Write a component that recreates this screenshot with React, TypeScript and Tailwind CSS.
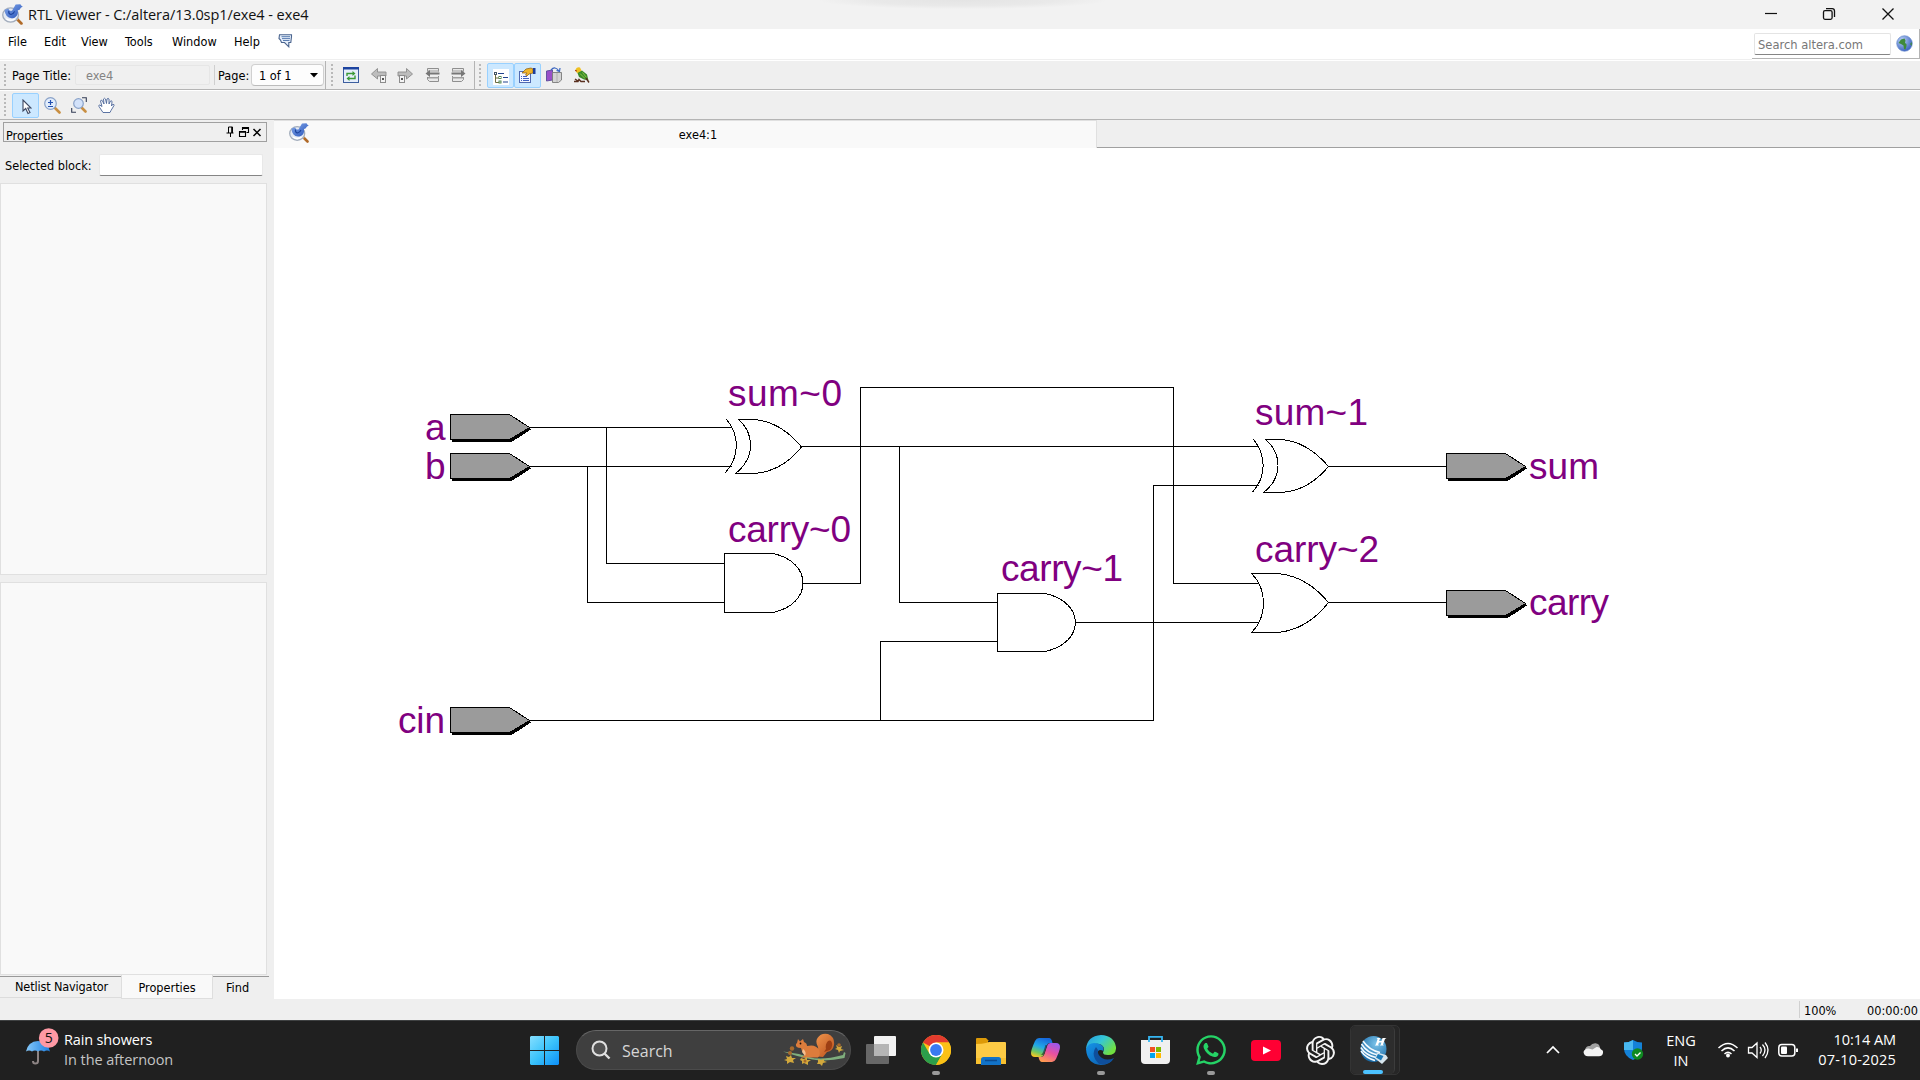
import type { ReactNode } from "react";
import { SiOpenai } from "react-icons/si";
import { FaWhatsapp } from "react-icons/fa";

function ViewerLogo({ size }: { size: number }) {
  return (
    <svg width={size} height={size} viewBox="0 0 20 20">
      <defs>
        <linearGradient id="bird" x1="0" y1="0" x2="1" y2="1">
          <stop offset="0" stopColor="#86abec" />
          <stop offset="1" stopColor="#2450b8" />
        </linearGradient>
      </defs>
      <path d="M14.500 14.500l4 4" stroke="#b06a28" strokeWidth="2.600" strokeLinecap="round" />
      <path d="M13 13l2 2" stroke="#e0b070" strokeWidth="2" />
      <ellipse cx="8.200" cy="10.500" rx="7.500" ry="6.800" fill="#e4eaf4" stroke="#a3adbc" strokeWidth="1.300" />
      <path d="M2.500 5.500l3.500-1 1.500 2h2l2-3.500 1.500-2.500 4.500-.3 1 1.500 1.300.7-1.800 1.200-1.500 2-1.500.4q.8 5-3 7-5 1.500-7.500-1.500-2-2.500-2-6z" fill="url(#bird)" />
      <path d="M6.500 6.500q-.5 3 2 3.500 2.500-.5 3.500-3" stroke="#1b429c" strokeWidth="1.100" fill="none" />
      <path d="M4 14q4 3 8.500 0" stroke="#fff" strokeWidth="1.300" fill="none" />
    </svg>
  );
}

function Grip() {
  return (
    <div className="flex w-[3px] flex-col gap-[2px]">
      {[0, 1, 2, 3, 4, 5].map((i) => (
        <div key={i} className="h-[2px] w-[2px] bg-[#b9b9b9]" />
      ))}
    </div>
  );
}

function TitleBar() {
  return (
    <div className="flex h-[29px] items-center bg-[#f2f2f2]">
      <div className="ml-[2px] w-[26px]">
        <ViewerLogo size={21} />
      </div>
      <div className="w-[300px] whitespace-nowrap font-['Open_Sans',sans-serif] text-[14.500px] tracking-[-0.07px] text-[#111]">
        RTL Viewer - C:/altera/13.0sp1/exe4 - exe4
      </div>
      <div className="ml-[492px] h-[9px] w-[286px] self-start bg-[radial-gradient(ellipse_at_top,#e4e4e4_0%,#e9e9e9_45%,#f2f2f2_72%)]" />
      <svg width="150" height="29" viewBox="1765 0 150 29" fill="none" stroke="#111" className="ml-auto mr-[5px]">
        <path d="M1765 13.500h12" strokeWidth="1.2" />
        <rect x="1823.500" y="10.700" width="8.600" height="8.600" rx="1.500" strokeWidth="1.3" />
        <path d="M1826 8.600h6.200q2.300 0 2.300 2.300v6.200" strokeWidth="1.3" />
        <path d="M1882.500 8.500l11 11M1893.500 8.500l-11 11" strokeWidth="1.3" />
      </svg>
    </div>
  );
}

function MenuBar() {
  return (
    <div className="flex h-[32px] bg-white">
      <div className="flex h-[31px] flex-1 border-b border-[#efefef]">
        <div className="flex h-[25px] items-center pl-[8px]">
          <span className="w-[36px]">File</span>
          <span className="w-[37px]">Edit</span>
          <span className="w-[44px]">View</span>
          <span className="w-[47px]">Tools</span>
          <span className="w-[62px]">Window</span>
          <span className="w-[44px]">Help</span>
          <svg width="15" height="14" viewBox="0 0 15 14" className="mb-[1px]">
            <path d="M1.500.7h12v2l-.7 5.800h-2v4.300L6.500 8.500h-3L2.500 6 1 4.500z" fill="#e6effb" stroke="#4a648e" strokeWidth="1.100" />
            <path d="M3.500 2.700h8.500M4 4.600h8M5 6.500h6.500" stroke="#4a6fa8" strokeWidth=".9" />
          </svg>
        </div>
      </div>
      <div className="flex h-[30px] w-[168px] border-b border-r border-[#b4b4b4] pl-[2px] pt-[4px]">
        <div className="flex h-[22px] w-[137px] items-center rounded-[2px] border border-[#e4e4e4] border-b-[#858585] pl-[3px] pt-[1px] text-[12.800px] text-[#777]">
          Search altera.com
        </div>
        <svg width="17" height="17" viewBox="0 0 17 17" className="ml-[5px] mt-[2px]">
          <defs>
            <radialGradient id="globe" cx=".35" cy=".3" r=".8">
              <stop offset="0" stopColor="#bcd3f8" />
              <stop offset="1" stopColor="#2b55b8" />
            </radialGradient>
          </defs>
          <circle cx="8.500" cy="8.500" r="7.800" fill="url(#globe)" stroke="#6d8fd0" strokeWidth=".7" />
          <path d="M2.500 8l2.500-3.500 3.500-1 1 2-.5 2.500 1.500 1v2l-1 3.500-1.500-.5-.5-3.500-2.500-1.500zM14 9l1.800-2v4z" fill="#3f8a3c" />
        </svg>
      </div>
    </div>
  );
}

const ToolIcon = ({ x, children }: { x: string; children: ReactNode }) => (
  <div className={x}>
    <svg width="16" height="16" viewBox="0 0 16 16">
      {children}
    </svg>
  </div>
);

function PageToolbar() {
  return (
    <div className="flex h-[29px] items-center border-b border-[#b4b4b4] bg-[#efefef] pl-[4px]">
      <Grip />
      <span className="ml-[5px] w-[63px] whitespace-nowrap pt-[1px]">Page Title:</span>
      <div className="flex h-[20px] w-[135px] items-center rounded-[2px] border border-[#e6e6e6] bg-[#f0f0f0] pl-[10px] pt-[1px] text-[#838383]">exe4</div>
      <div className="ml-[4px] h-[20px] w-px bg-[#cfcfcf]" />
      <span className="ml-[3px] w-[33px] whitespace-nowrap pt-[1px]">Page:</span>
      <div className="flex h-[22px] w-[73px] items-center rounded-[4px] border border-[#d0d0d0] border-b-[#bcbcbc] bg-[#fdfdfd] pl-[7px]">
        <span className="w-[51px] whitespace-nowrap pt-[1px]">1 of 1</span>
        <svg width="8" height="5" viewBox="0 0 8 5">
          <path d="M0 0h8L4 4.500z" fill="#000" />
        </svg>
      </div>
      <div className="ml-[1px] h-full w-px bg-[#b4b4b4]" />
      <div className="ml-[5px]">
        <Grip />
      </div>
      <ToolIcon x="ml-[9px]">
        <rect x=".5" y=".5" width="15" height="15" fill="#e6eefb" stroke="#3d5f9f" />
        <path d="M0 0h16v2.500H0z" fill="#1d44a0" />
        <path d="M4 9V6.500h6.500M12 8.500v3H5.500" fill="none" stroke="#3a9a36" strokeWidth="1.400" />
        <path d="M9.500 4l3 2.500-3 2.500zM6.500 9l-3 2.500 3 2.500z" fill="#3a9a36" />
      </ToolIcon>
      <ToolIcon x="ml-[12px]">
        <path d="M.5 7l6-5.500V5H15v4H6.500v3z" fill="#bdbdbd" stroke="#8c8c8c" strokeWidth=".9" />
        <rect x="9.500" y="8.500" width="5" height="7" fill="#f4f4f4" stroke="#8c8c8c" />
        <path d="M11 11h2v2h-2z" fill="#555" />
      </ToolIcon>
      <ToolIcon x="ml-[10px]">
        <path d="M15.500 7l-6-5.500V5H1v4h8.500v3z" fill="#bdbdbd" stroke="#8c8c8c" strokeWidth=".9" />
        <rect x="2.500" y="8.500" width="5" height="7" fill="#f4f4f4" stroke="#8c8c8c" />
        <path d="M4 11h2v2H4z" fill="#555" />
      </ToolIcon>
      <ToolIcon x="ml-[12px]">
        <path d="M2.500 4.500V1.500h11v3M2.500 10v2.500l2 2h9V9" fill="#e8e8e8" stroke="#8f8f8f" />
        <path d="M2 3.500h12v1H2zM3 10h11v1.500H3z" fill="#9f9f9f" />
        <path d="M.5 6.500L5 3v2.500h9.500v2H5V10z" fill="#777" />
      </ToolIcon>
      <ToolIcon x="ml-[10px]">
        <path d="M1.500 4.500V1.500h11v3M1.500 9v5.500h9l2-2V10" fill="#e8e8e8" stroke="#8f8f8f" />
        <path d="M1 3.500h12v1H1zM1 10h12v1.500H1z" fill="#9f9f9f" />
        <path d="M14.500 6.500L10 3v2.500H.5v2H10V10z" fill="#777" />
      </ToolIcon>
      <div className="ml-[7px] h-full w-px bg-[#b4b4b4]" />
      <div className="ml-[4px]">
        <Grip />
      </div>
      <div className="ml-[5px] flex h-[25px] w-[27px] items-center justify-center rounded-[2px] border border-[#99d1ff] bg-[#cce8ff]">
        <svg width="16" height="16" viewBox="0 0 16 16" className="mt-[3px]">
          <path d="M0 0h16v16H0z" fill="#fff" />
          <path d="M2.500 5v8.500H6M2.500 9H6" fill="none" stroke="#6b6b40" strokeWidth="1" />
          <rect x="1.500" y="3.500" width="2" height="2" fill="#fff" stroke="#456" />
          <rect x="6" y="7.500" width="2" height="2" fill="#fff" stroke="#585" />
          <rect x="6" y="12" width="2" height="2" fill="#fff" stroke="#585" />
          <path d="M5 4.500h6M10 8.500h5M10 13h5" stroke="#23448f" strokeWidth="1.2" />
        </svg>
      </div>
      <div className="flex h-[25px] w-[27px] items-center justify-center rounded-[2px] border border-[#99d1ff] bg-[#cce8ff]">
        <svg width="17" height="16" viewBox="0 0 17 16">
          <rect x=".5" y="4.500" width="11" height="11" fill="#f5f7ff" stroke="#5068b0" />
          <path d="M2 11.500h1M4 11.500h6M2 13.500h1M4 13.500h6M2 9.500h1M4 9.500h4" stroke="#3f5fc0" />
          <path d="M3 6l4-4 5-1 2 1v4l-4 1-2 2-1.500-1L8 6z" fill="#f0b429" stroke="#8a5a10" strokeWidth=".7" />
          <path d="M14 1h2.500v6H14z" fill="#1c3d9a" />
        </svg>
      </div>
      <ToolIcon x="ml-[5px]">
        <path d="M.5 4l6-1v10l-6 1z" fill="#9a50c8" stroke="#5a4a98" strokeWidth=".9" />
        <path d="M6.500 5.500h9v7.500l-3 2.500h-6z" fill="#d4d4d4" stroke="#7b7b7b" strokeWidth=".9" />
        <path d="M11 6v9" stroke="#b0b0b0" />
        <path d="M5 3q4-4.500 8 1M10.500 3.500l3 1 .5-3.500" fill="none" stroke="#3b66c0" strokeWidth="1.2" />
      </ToolIcon>
      <ToolIcon x="ml-[12px]">
        <path d="M1.500 2.500Q3-.5 6 .5l1.500 3L5 7 2 5z" fill="#f0c020" />
        <path d="M3.500 6L8 3.500l5 4 1.500 6-4.500-1-5-2.500z" fill="#3a8a2a" />
        <path d="M6 6.500l5 5M8.500 5.500l4 5" stroke="#8cc840" />
        <path d="M0 14.500h4l1-2 2 2h4M12 11l3 4.500M1 12l3 2" stroke="#5a3020" strokeWidth="1.400" fill="none" />
        <path d="M1 3.500l2 .5" stroke="#a03010" />
      </ToolIcon>
    </div>
  );
}

function SelectionToolbar() {
  return (
    <div className="flex h-[30px] items-center border-b border-t border-b-[#b4b4b4] border-t-white bg-[#efefef] pl-[4px]">
      <Grip />
      <div className="ml-[5px] flex h-[25px] w-[27px] items-center justify-center rounded-[2px] border border-[#99d1ff] bg-[#cce8ff]">
        <svg width="10" height="16" viewBox="0 0 10 16" className="ml-[2px] mt-[4px]">
          <path d="M1 1v11l2.700-2.500L6 14.500l2-1-2.300-4.500H9z" fill="#fff" stroke="#3c4660" strokeWidth="1.1" />
        </svg>
      </div>
      <svg width="17" height="17" viewBox="0 0 17 17" className="ml-[5px]">
        <path d="M11 11l4.500 4.500" stroke="#c98f42" strokeWidth="2.600" strokeLinecap="round" />
        <circle cx="6.500" cy="6.500" r="5.800" fill="#e2edfc" stroke="#8aa2c8" strokeWidth="1.2" />
        <path d="M6.500 3v5M4 5.500h5M4 9.500h5" stroke="#2350b0" strokeWidth="1.2" />
      </svg>
      <svg width="16" height="16" viewBox="0 0 16 16" className="ml-[10px]">
        <path d="M11 11l3.500 3.500" stroke="#c98f42" strokeWidth="2.600" strokeLinecap="round" />
        <circle cx="7.500" cy="6.500" r="4.800" fill="#d3e2fa" stroke="#8aa2c8" strokeWidth="1.200" />
        <path d="M11 .7h4.300V5M.7 11v4.300H5" fill="none" stroke="#333c55" strokeWidth="1.1" />
      </svg>
      <svg width="17" height="17" viewBox="0 0 17 17" className="ml-[11px]">
        <path d="M5 15.500L1 9.500Q.3 8 1.800 8L4 9.500 2.500 4Q3 2.500 4.200 3.500L6 7 5.500 2Q6.500.5 7.500 2L8.500 6.500 9 2Q10.200.8 11 2L11 7 12.500 4Q14 3.200 14 4.800L13.500 9 14.500 7.500Q16.500 7 16 8.500L13 13.500 12 15.500z" fill="#fff" stroke="#4a6498" strokeWidth=".9" />
      </svg>
    </div>
  );
}

function PropertiesPanel() {
  return (
    <div className="flex w-[274px] flex-col">
      <div className="ml-[3px] mt-[2px] flex h-[20px] w-[264px] items-center border border-[#a0a0a0] pl-[2px]">
        <span className="mt-[7px] w-[220px]">Properties</span>
        <svg width="36" height="12" viewBox="226 126 36 12" fill="none" stroke="#000" className="mb-[1px]">
          <path d="M228.500 133v-6h4v6M226.500 133h7M230.500 133v4M231.700 127v6" strokeWidth="1" />
          <path d="M242.500 130v-2.500h6v5h-2M242 128.500h7M239.500 131.500h6v5h-6zM239 132.200h7" strokeWidth="1.1" />
          <path d="M253.500 129l7 7M260.500 129l-7 7" strokeWidth="1.500" />
        </svg>
      </div>
      <div className="mt-[12px] flex h-[22px] items-center pl-[5px]">
        <span className="w-[94px] whitespace-nowrap pt-[2px]">Selected block:</span>
        <div className="h-[22px] w-[164px] rounded-[2px] border border-[#e8e8e8] border-b-[#858585] bg-white" />
      </div>
      <div className="mt-[7px] h-[392px] w-[267px] border border-[#e0e0e0] bg-[#f9f9f9]" />
      <div className="mt-[7px] h-[393px] w-[267px] border border-[#e0e0e0] bg-[#f9f9f9]" />
      <div className="flex">
        <div className="mt-px flex h-[22px] w-[121px] items-center justify-center whitespace-nowrap border-b border-t border-b-[#dcdcdc] border-t-[#999] bg-[#f0f0f0] pl-[2px] tracking-[-0.15px]">
          Netlist Navigator
        </div>
        <div className="flex h-[24px] w-[92px] items-center justify-center border border-t-0 border-[#dedede] bg-[#f9f9f9] pt-[2px]">Properties</div>
        <div className="mt-px flex h-[22px] w-[56px] items-center border-t border-[#999] pl-[13px]">Find</div>
      </div>
    </div>
  );
}

const pins = [
  [450, 414],
  [450, 453],
  [450, 707],
  [1446, 453],
  [1446, 590],
];

const labels: [string, number, number, number][] = [
  ["a", 425, 440, 20],
  ["b", 425, 479, 20],
  ["cin", 398, 733, 47],
  ["sum~0", 728, 406, 114],
  ["carry~0", 728, 542, 123],
  ["carry~1", 1001, 581, 122],
  ["sum~1", 1255, 425, 113],
  ["carry~2", 1255, 562, 124],
  ["sum", 1529, 479, 70],
  ["carry", 1529, 615, 80],
];

function Schematic() {
  return (
    <svg width="1646" height="851" viewBox="274 148 1646 851" className="block bg-white">
      <g fill="none" stroke="#000" strokeWidth="1" shapeRendering="crispEdges">
        <path d="M530 427.500H732M530 466.500H732M606.500 427V563.500H724M587.500 466V602.500H724" />
        <path d="M803 583.500H860.500V387.500H1173.500V583.500H1258.500M802 446.500H1258.500M899.500 446V602.500H997" />
        <path d="M530 720.500H1153.500V485.500H1258.500M880.500 720V641.500H997M1076 622.500H1258.500M1329 466.500H1446M1329 602.500H1446" />
        <path d="M773 553.500H724.500V612.500H773C813 604 813 562 773 553.500" fill="#fff" />
        <path d="M1045 593.500H997.500V651.500H1045C1085.500 643 1085.500 602 1045 593.500" fill="#fff" />
        <path d="M726.500 419.500C740 435 740 458 724.500 473.500" />
        <path d="M753.500 419.500H738.500C755 434 755 458 735.500 473.500H753.500C777 472 792 459 801.500 447C790 433 775 421 753.500 419.500" />
        <path d="M1253.500 439.500C1266.500 455 1266.500 477 1252.500 492" />
        <path d="M1281 439.500H1265.500C1282.500 454 1282.500 478 1263.500 492.500H1281C1304 491 1319 478 1328.500 466.500C1317 453 1302 441 1281 439.500" />
        <path d="M1278 573.500H1251.500C1267.500 589 1267.500 617 1251.500 632.500H1278C1302 630 1318 616 1328.500 602.500C1317 589 1302 576 1278 573.500" />
      </g>
      {pins.map(([x, y]) => (
        <g key={`${x}-${y}`} shapeRendering="crispEdges">
          <path d={`M${x + 2} ${y + 28}H${x + 61.5}L${x + 81} ${y + 15.5}L${x + 79} ${y + 12}L${x + 58} ${y + 24}H${x + 2}z`} fill="#000" />
          <path d={`M${x + 0.5} ${y + 0.5}H${x + 59.5}L${x + 79.5} ${y + 13.5}L${x + 59.5} ${y + 25.5}H${x + 0.5}z`} fill="#9b9b9b" stroke="#000" />
        </g>
      ))}
      <g fill="#800080" fontFamily="'Liberation Sans', Arial, sans-serif" fontSize="37">
        {labels.map(([text, x, y, w]) => (
          <text key={text} x={x} y={y} textLength={w}>
            {text}
          </text>
        ))}
      </g>
    </svg>
  );
}

function Workspace() {
  return (
    <div className="w-[1646px]">
      <div className="flex h-[28px]">
        <div className="flex h-[28px] w-[823px] items-center border-r border-t border-[#e0e0e0] bg-[#f9f9f9] pl-[15px]">
          <div className="mb-[3px]">
            <ViewerLogo size={20} />
          </div>
          <span className="w-[778px] text-center">exe4:1</span>
        </div>
        <div className="flex-1 border-b border-[#a0a0a0]" />
      </div>
      <Schematic />
    </div>
  );
}

function StatusBar() {
  return (
    <div className="flex h-[21px] items-center bg-[#efefef]">
      <div className="ml-auto h-[17px] w-px bg-[#d0d0d0]" />
      <span className="ml-[4px] mt-[2px] w-[63px]">100%</span>
      <span className="mt-[2px] w-[53px] whitespace-nowrap">00:00:00</span>
    </div>
  );
}

function TaskItem({ children, running }: { children: ReactNode; running?: boolean }) {
  return (
    <div className="flex h-[58px] w-[55px] flex-col items-center">
      <div className="flex h-[49px] items-center pt-[9px]">{children}</div>
      {running && <div className="mt-[1px] h-[4px] w-[8px] rounded-full bg-[#9a9a9a]" />}
    </div>
  );
}

function Squirrel() {
  return (
    <svg width="64" height="34" viewBox="0 0 64 34">
      <defs>
        <linearGradient id="tail" x1="0" y1="0" x2="1" y2="1">
          <stop offset="0" stopColor="#f39a50" />
          <stop offset="1" stopColor="#b9501c" />
        </linearGradient>
      </defs>
      <path d="M0 18.500q14 1.500 26 5.500t34-2l1-3 1.500 1-1 5q-18 4-32 1.500T0 18.500z" fill="#7fae7d" />
      <path d="M30 23q6-4 5-9-3-5-.5-9Q38-.5 45 1q7 3 6 11-1 6-7 7l-4 5z" fill="url(#tail)" />
      <path d="M45 8q-3 3-2 8l-2 3 6-2q4-5 1-9-1-1-3 0z" fill="#9c3f14" />
      <path d="M14 10l1-4 2 2.500 3-2.500 1 3q3 1 3 4 9-2 12 4 2 5-1 7.500H18l4-2.500-3-4-1-3q-6 0-5-4z" fill="#dc7c3c" />
      <path d="M20 16q4 3 2 7l-3-4z" fill="#f6c090" />
      <circle cx="17.500" cy="10.500" r=".9" fill="#201008" />
      <g fill="#d2a83c">
        <path d="M3 23l3 1 2-2 1 3 4 0-3 2 1 3-4-1-3 2 0-3-3-1 3-1zM18 25l3 1 3-2 0 3 4 0-3 2 0 3-4-2-2 1 0-3-2-1zM35 26l3 1 3-1 0 2 3 1-4 1-1 3-2-2-3 0 1-2zM53 12l3 2 3-1-1 3 3 1-4 1-1 2-1-3-3-1 2-1z" />
      </g>
      <g fill="#a86a2c">
        <circle cx="9" cy="15.500" r="2.200" />
        <circle cx="7" cy="20" r="2" />
        <circle cx="56" cy="12" r="1.800" />
        <circle cx="22" cy="28" r="1.500" />
      </g>
    </svg>
  );
}

function Taskbar() {
  return (
    <div className="flex h-[60px] border-t border-[#3f4142] bg-[#202020] font-['Open_Sans',sans-serif] text-white">
      <div className="flex w-[530px] pl-[25px] pt-[6px]">
        <svg width="36" height="40" viewBox="25 1027 36 40">
          <defs>
            <linearGradient id="umbrella" x1="0" x2="1">
              <stop offset="0" stopColor="#85c8fa" />
              <stop offset="1" stopColor="#1e7fe0" />
            </linearGradient>
          </defs>
          <path d="M38 1050v11q0 2.500-2.700 2.500-2.300 0-2.300-2.500" fill="none" stroke="#8d8484" strokeWidth="2" />
          <path d="M26 1051.500q2-10 12-10.500 10 .5 12 10.500-3-2-6 0-3-2-6 0-3-2-6 0-3-2-6 0z" fill="url(#umbrella)" />
          <circle cx="48.700" cy="1038" r="9.800" fill="#ff99a4" />
          <text x="48.700" y="1043" fontSize="14" textAnchor="middle" fill="#111" fontFamily="'Open Sans', sans-serif">5</text>
        </svg>
        <div className="ml-[3px] mt-[3px] whitespace-nowrap text-[14.500px] leading-[20px]">
          <div className="tracking-[-0.15px]">Rain showers</div>
          <div className="tracking-[-0.06px] text-[#c4c4c4]">In the afternoon</div>
        </div>
      </div>
      <svg width="29" height="29" viewBox="0 0 29 29" className="mt-[15px]">
        <defs>
          <linearGradient id="win" x1="0" y1="0" x2="1" y2="1">
            <stop offset="0" stopColor="#85dfff" />
            <stop offset=".5" stopColor="#3bc3fb" />
            <stop offset="1" stopColor="#0d8ff8" />
          </linearGradient>
        </defs>
        <path d="M1 0h13v14H0V1zM15 0h13l1 1v13H15zM0 15h14v14H1l-1-1zM15 15h14v13l-1 1H15z" fill="url(#win)" />
      </svg>
      <div className="ml-[17px] mt-[9px] flex h-[40px] w-[275px] items-center rounded-full border border-[#4b4b4b] border-t-[#666] bg-[#3f3f3f]">
        <svg width="20" height="20" viewBox="0 0 20 20" fill="none" stroke="#e0e0e0" strokeWidth="2" className="ml-[14px]">
          <circle cx="8.500" cy="8.500" r="7" fill="#525252" />
          <path d="M13.500 13.500l5 5" strokeWidth="2.400" />
        </svg>
        <span className="ml-[11px] w-[161px] pt-[1px] text-[16px] text-[#d6d6d6]">Search</span>
        <Squirrel />
      </div>
      <svg width="31" height="28" viewBox="0 0 31 28" className="ml-[15px] mt-[15px]">
        <rect x="8" y="0" width="22" height="20" rx="1" fill="#f2f2f2" />
        <rect x="0" y="8" width="23" height="20" rx="1" fill="#6f6f6f" opacity=".9" />
        <path d="M8 8h15v12H8z" fill="#b5b5b5" />
      </svg>
      <div className="ml-[11px] flex">
        <TaskItem running>
          <svg width="30" height="30" viewBox="0 0 30 30">
            <circle cx="15" cy="15" r="15" fill="#fbc116" />
            <path d="M2 7.500A15 15 0 0 1 28 7.500H15L8.500 11z" fill="#e33b2e" />
            <path d="M2 7.500A15 15 0 0 0 15 30l6.500-11.300H8.500z" fill="#2c9f4b" />
            <path d="M15 7.500h13A15 15 0 0 1 15 30l6.500-11.300z" fill="#fbc116" />
            <circle cx="15" cy="15" r="7.500" fill="#fff" />
            <circle cx="15" cy="15" r="5.900" fill="#3a7af0" />
          </svg>
        </TaskItem>
        <TaskItem>
          <svg width="30" height="27" viewBox="0 0 30 27" className="mt-[2px]">
            <path d="M0 1q0-1 1-1h9l3 3h-1v5H0z" fill="#dd9a08" />
            <path d="M10 5l3-1h16q1 0 1 1v21H0V6q6 0 10-1z" fill="#fdcb45" />
            <path d="M0 20h30v5q0 1-1 1H0z" fill="#f8c02f" />
            <path d="M5 27v-5.500q0-2.500 2.500-2.500h15q2.500 0 2.500 2.500V27z" fill="#1273c8" />
            <path d="M9 22.500h12" stroke="#0b4b90" strokeWidth="1.500" />
          </svg>
        </TaskItem>
        <TaskItem>
          <svg width="29" height="26" viewBox="0 0 29 26">
            <defs>
              <linearGradient id="copA" x1=".6" y1="0" x2=".2" y2="1">
                <stop offset="0" stopColor="#1668dc" />
                <stop offset=".45" stopColor="#20a8e8" />
                <stop offset=".75" stopColor="#70c860" />
                <stop offset="1" stopColor="#ffc820" />
              </linearGradient>
              <linearGradient id="copB" x1=".8" y1="0" x2=".3" y2="1">
                <stop offset="0" stopColor="#9858f0" />
                <stop offset=".5" stopColor="#e850a0" />
                <stop offset="1" stopColor="#ff9a50" />
              </linearGradient>
            </defs>
            <path d="M8 1h10q2.500 0 3.500 5h-3q-2 0-3 3l-3 9q-1 2-3 2H4q-4 0-4-4 0-3 4-12 1.500-3 4-3z" fill="url(#copA)" />
            <path d="M21 25H11q-2.500 0-3.500-5h3q2 0 3-3l3-9q1-2 3-2H25q4 0 4 4 0 3-4 12-1.500 3-4 3z" fill="url(#copB)" />
            <path d="M16 8l-3.500 10h-3q1.500 0 3-4l2-6z" fill="#202020" opacity=".6" />
          </svg>
        </TaskItem>
        <TaskItem running>
          <svg width="30" height="30" viewBox="0 0 30 30">
            <defs>
              <linearGradient id="edgeTop" x1="0" y1="0" x2="1" y2=".6">
                <stop offset="0" stopColor="#2499e0" />
                <stop offset=".5" stopColor="#35c6d6" />
                <stop offset="1" stopColor="#72e040" />
              </linearGradient>
              <linearGradient id="edgeLow" x1="0" y1="0" x2="1" y2="1">
                <stop offset="0" stopColor="#1594e8" />
                <stop offset="1" stopColor="#0c58a8" />
              </linearGradient>
            </defs>
            <path d="M0 14Q1 1 15 0q13 .5 15 12 .5 8-8 8-5 0-5-2.500Q20 11 13 9 6 8 0 14z" fill="url(#edgeTop)" />
            <path d="M0 14Q3 6 12 8.500q7 2 5.500 7.500Q12 13 11 19q0 6 7 7 6 1 10-3-4 7-13 7Q1 29 0 14z" fill="url(#edgeLow)" />
            <path d="M10 12q-6 8 3 17 9 2 15-6-7 3-12 0-5-3-4-8z" fill="#0f4f9c" />
          </svg>
        </TaskItem>
        <TaskItem>
          <svg width="29" height="30" viewBox="0 0 29 30">
            <path d="M8 7V1.800h13V7" fill="none" stroke="#35b6f2" strokeWidth="1.800" />
            <path d="M0 5h29v20q0 4-4 4H4q-4 0-4-4z" fill="#f0f0f0" />
            <path d="M8 7V5M21 7V5" stroke="#35b6f2" strokeWidth="1.800" />
            <path d="M9 12h5v5H9z" fill="#f25022" />
            <path d="M15 12h5v5h-5z" fill="#7fba00" />
            <path d="M9 18h5v5H9z" fill="#00a4ef" />
            <path d="M15 18h5v5h-5z" fill="#ffb900" />
          </svg>
        </TaskItem>
        <TaskItem running>
          <FaWhatsapp size={34} color="#25d366" />
        </TaskItem>
        <TaskItem>
          <svg width="30" height="21" viewBox="0 0 30 21">
            <rect width="30" height="21" rx="4" fill="#ff0033" />
            <path d="M12 6.500l8 4-8 4z" fill="#fff" />
          </svg>
        </TaskItem>
        <TaskItem>
          <SiOpenai size={29} color="#f4f4f4" />
        </TaskItem>
      </div>
      <div className="ml-[2px] mt-[4px] flex h-[50px] w-[50px] rounded-[5px] border border-[#343434] bg-[#262626]">
        <div className="flex w-[44px] flex-col items-center rounded-[5px] border-r border-[#3c3c3c] bg-[#2d2d2d] pt-[9px]">
          <svg width="30" height="30" viewBox="0 0 30 30" className="ml-[3px]">
            <defs>
              <radialGradient id="quartus" cx=".6" cy=".3" r=".8">
                <stop offset="0" stopColor="#7cc4ea" />
                <stop offset="1" stopColor="#0d5f9e" />
              </radialGradient>
            </defs>
            <circle cx="14.500" cy="14" r="13" fill="url(#quartus)" />
            <path d="M2.500 9Q8 18 19 20M4 6Q10 15 21 17.500M1.800 12.500Q7 20.500 17 22.500M2 16Q7 23 16 25.500" fill="none" stroke="#f4faff" strokeWidth="1.500" />
            <path d="M18 17.500l9 2.500 2 3-6 6-7-5.500z" fill="#d8e6ee" />
            <path d="M19 19l5.500 2-2.500 4.500-5-3z" fill="#1b7ab8" />
            <path d="M17.500 3h4l-.7 1-.8 2h2.500l1-3h4l-1.500 1-2 5.500.8 1h-4l1-1 .6-2H20l-.8 2 .6 1h-4l1-1 1.800-5.500z" fill="#fff" />
          </svg>
          <div className="mt-[5px] h-[4px] w-[20px] rounded-full bg-[#4cc2ff]" />
        </div>
      </div>
      <div className="ml-[146px] flex items-center">
        <svg width="100" height="30" viewBox="1546 1035 100 30" className="mb-[2px]">
          <path d="M1547 1053l6-6 6 6" fill="none" stroke="#fff" strokeWidth="1.700" />
          <path d="M1587 1053q-3.500-3-.5-6 1.500-1.500 3.500-1 2-3 5.500-2.800 4 .3 4.500 4.800l1.500 5z" fill="#a2a2a2" />
          <path d="M1583.500 1052q1-3.500 5-3.500l4 1 4-2.500q3.500-.5 4.500 2.500 2.500.5 2 3.500-.7 3.200-4 3.200h-11q-4 0-4.500-4.200z" fill="#f4f4f4" />
          <path d="M1624 1042.500q5 0 9-2.500 4 2.500 9 2.500v6q0 8-9 11.500-9-3.500-9-11.500z" fill="#1482d8" />
          <path d="M1624 1042.500q5 0 9-2.500v10h-9z" fill="#48b8f0" />
          <circle cx="1637.500" cy="1054" r="5.700" fill="#0f8a20" />
          <path d="M1635 1054l2 2 3.500-3.500" fill="none" stroke="#fff" strokeWidth="1.300" />
        </svg>
        <div className="ml-[17px] w-[36px] text-center text-[14.500px] leading-[20px]">
          <div>ENG</div>
          <div>IN</div>
        </div>
        <svg width="84" height="30" viewBox="1716 1035 84 30" fill="none" stroke="#fff" strokeWidth="1.500" className="mb-[2px] ml-[17px]">
          <path d="M1718.500 1048q9.500-9 19 0M1721.500 1051q6.500-6.300 13 0M1724.500 1054q3.500-3.300 7 0" />
          <circle cx="1728" cy="1055.500" r="1.200" fill="#fff" />
          <path d="M1748.500 1047.500h3.500l5-4.500v14.500l-5-4.500h-3.500zM1760 1047q2.500 3 0 6.500M1762.500 1044.500q5 5.500 0 11.500M1765 1042.500q6 7.500 0 15.500" strokeWidth="1.300" />
          <rect x="1778.800" y="1044.500" width="16" height="11.500" rx="3" />
          <path d="M1797 1048.500v3.500" strokeWidth="2" />
          <rect x="1781" y="1046.500" width="6" height="7.500" rx="1" fill="#fff" stroke="none" />
        </svg>
        <div className="mb-[2px] ml-[12px] w-[84px] whitespace-nowrap text-right text-[14.500px] leading-[20px]">
          <div className="tracking-[-0.05px]">10:14 AM</div>
          <div className="tracking-[0.2px]">07-10-2025</div>
        </div>
      </div>
    </div>
  );
}

export default function App() {
  return (
    <div className="flex h-[1080px] w-[1920px] flex-col overflow-hidden bg-[#efefef] font-['DejaVu_Sans_Condensed','Noto_Sans',sans-serif] text-[12.600px] leading-[16px] text-black">
      <TitleBar />
      <MenuBar />
      <PageToolbar />
      <SelectionToolbar />
      <div className="flex h-[879px]">
        <PropertiesPanel />
        <Workspace />
      </div>
      <StatusBar />
      <Taskbar />
    </div>
  );
}
